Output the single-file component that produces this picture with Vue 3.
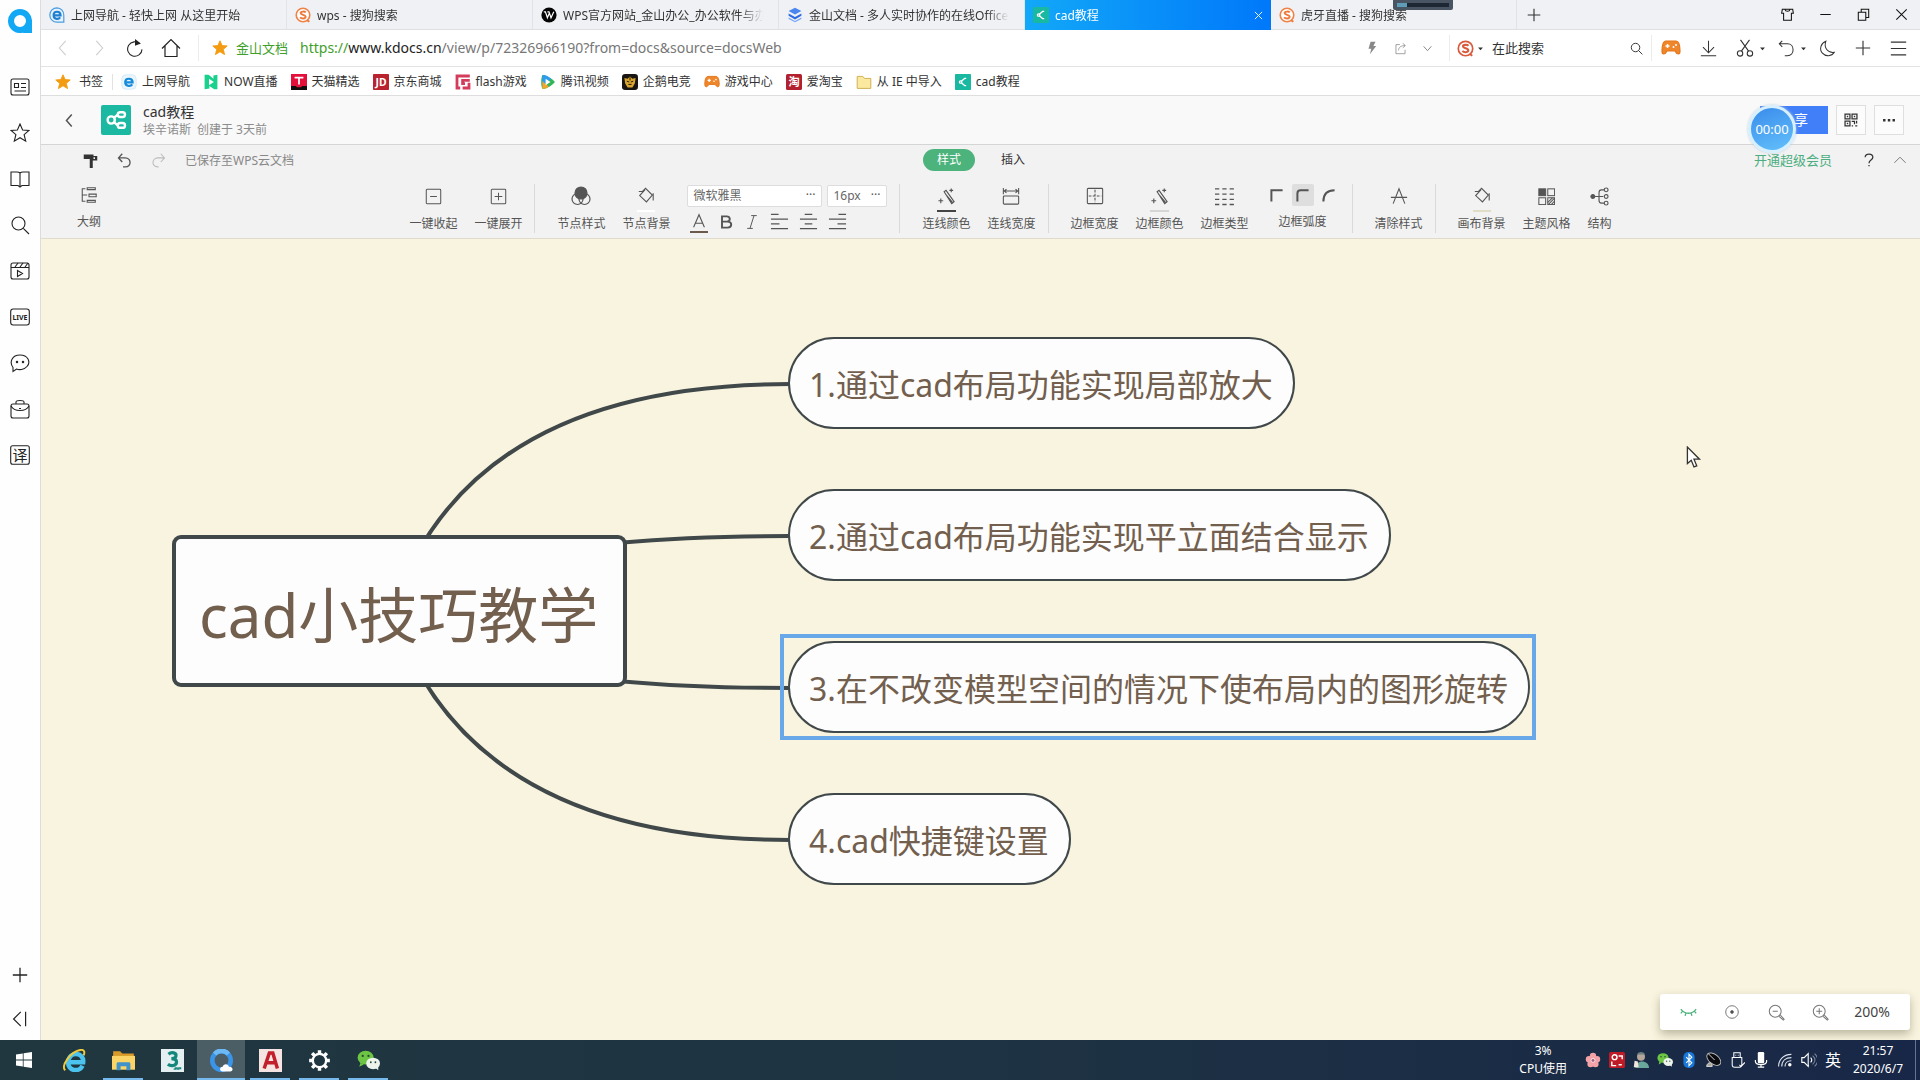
<script setup>
import { h, ref } from 'vue'

const star = '<path d="M10 1l2.6 6 6.4.5-4.9 4.2 1.6 6.5L10 14.7 4.300 18.200l1.600-6.500L1 7.500 7.400 7z"/>'
const sogou = '<circle cx="10" cy="10" r="8.500" stroke="#ee8247" stroke-width="2" fill="#fff"/><path d="M13.500 6.800C12 5.200 7 5.300 7 7.600c0 2.600 6.300 1.700 6.300 4.600 0 2.600-5 2.800-7 .8M15 16.500l3 2" stroke="#ee7a3c" stroke-width="2.400"/>'
const wand = '<path d="M7.500 5l2-1.500L18 15.500 15.500 17.500zM9 7.500l7.500 9M15 1.500v4M13 3.500h4M4 12v5M1.500 14.500h5"/>'
const bucket = '<path d="M5.500 5.500L9.500 1.500l7.500 7.500-6.500 7.500-7.500-7L9 3M2 5h5M18 7v8"/>'
const mind = '<circle cx="6" cy="10" r="3"/><path d="M8.500 8l3-2.500M8.500 12l3 2.500"/><rect x="11.500" y="3.500" width="6" height="4" rx="2"/><rect x="11.500" y="12.500" width="6" height="4" rx="2"/>'
const wechat = '<ellipse cx="7.500" cy="7.500" rx="7" ry="6" fill="#6cc644" stroke="none"/><path d="M3 12l-1 3.500 4-2z" fill="#6cc644" stroke="none"/><ellipse cx="14" cy="12.500" rx="6" ry="5" fill="#eef4ec" stroke="none"/><path d="M16 16.500l2.500 2v-4z" fill="#eef4ec" stroke="none"/><g fill="#2b4a35" stroke="none"><circle cx="5" cy="6" r="1"/><circle cx="10" cy="6" r="1"/><circle cx="12" cy="11.500" r=".8"/><circle cx="16" cy="11.500" r=".8"/></g>'

const icons = {
  star: `<g fill="#f39c12" stroke="#f39c12">${star}</g>`,
  starLine: star,
  navE: '<path d="M10 1a9 9 0 1 0 0 18h8.500v-8.500A9 9 0 0 0 10 1z" fill="#e8f2fb" stroke="#4a9de0" stroke-width="1.500"/><path d="M5.500 10.500h9c0-6-8.500-6-8.800-.5-.2 5.500 6 6 8.300 3" stroke="#1f7fd0" stroke-width="2.600"/>',
  bookE: '<rect x="1" y="1" width="18" height="18" rx="5" fill="#eaf5fc" stroke="#d5ebf8"/><path d="M5 10.500h9.500c0-6-9-6-9.200-.5-.2 5.500 6.500 6 8.800 3" stroke="#178bd9" stroke-width="2.800"/>',
  sogou,
  sogouRed: sogou.replace(/#ee8247|#ee7a3c/g, '#d9593b'),
  wps: '<circle cx="10" cy="10" r="9.500" fill="#050505" stroke="none"/><path d="M3.500 6h2L8 13.500l2.500-6M8 6h2l2.500 7.500L16 6" stroke="#fff" stroke-width="1.500"/>',
  docs: '<path d="M10 1l8 4-8 4.500L2 5z" fill="#4a86f0" stroke="none"/><path d="M2 8l8 4.500L18 8v3l-8 4.500L2 11z" fill="#2f6be0" stroke="none"/><path d="M2 13l8 4.500 8-4.500v2l-8 4-8-4z" fill="#74a6f8" stroke="none"/>',
  mindSmall: '<rect width="20" height="20" rx="1" fill="#19b8a0" stroke="none"/><g stroke="#fff" stroke-width="1.600"><circle cx="7" cy="10" r="1.500"/><path d="M8 9l4-3.500h2M8 11l4 3.500h2"/></g>',
  mind: `<g stroke-width="2">${mind}</g>`,
  now: '<path d="M2 1h5l6 5V2l5-1v18h-4l-6-4v3l-6 1z" fill="#19d08c" stroke="none"/><path d="M7.500 6l6 4-6 4z" fill="#fff" stroke="none"/>',
  tmall: '<rect width="20" height="20" fill="#e3103c" stroke="none"/><path d="M0 15h6l1.500 1.500h5L14 15h6v5H0z" fill="#130c0e" stroke="none"/><path d="M4.500 4.500h11M10 4.500V13" stroke="#fff" stroke-width="2.200"/>',
  jd: '<rect width="20" height="20" rx="1" fill="#b8232f" stroke="none"/><text x="10" y="15" text-anchor="middle" font-size="13" font-weight="bold" fill="#fff" stroke="none">JD</text>',
  flash: '<path d="M18.500 2.500h-16v15h4M18.500 8h-9v4h3M9.500 17.500h8V11" stroke="#d43c5b" stroke-width="3.500"/>',
  video: '<path d="M3 1.500C6 0 18 8 18.500 10 18 12.500 6 20 3 18.500 1 15 1 5 3 1.500z" fill="#35b558" stroke="none"/><path d="M3 1.500C6 0 12 4 14 6L3 15z" fill="#2f9bef" stroke="none"/><path d="M3 18.500C5 19 9 17 11 15.500L3 9z" fill="#f8a42b" stroke="none"/><path d="M7 6l6 4-6 4z" fill="#fff" stroke="none"/>',
  penguin: '<rect width="20" height="20" rx="4" fill="#191512" stroke="none"/><path d="M3 5l4 1 3-3 3 3 4-1-1 7-3 5h-6l-3-5z" fill="#d9a52e" stroke="none"/><path d="M6 9l3 1M14 9l-3 1M8 13h4M10 4v4" stroke="#191512"/>',
  pad: '<path d="M5 3h10c3 0 4 5 4 10 0 4-3 4-5 0H6c-2 4-5 4-5 0C1 8 2 3 5 3z" fill="#f0862a" stroke="#e2761c"/><path d="M4.500 8h4M6.500 6v4" stroke="#fff" stroke-width="1.500"/><circle cx="12.500" cy="9" r="1" fill="#fff" stroke="none"/><circle cx="15" cy="7" r="1" fill="#fff" stroke="none"/>',
  tao: '<rect width="20" height="20" rx="2" fill="#b3202e" stroke="none"/><text x="10" y="15" text-anchor="middle" font-size="14" font-weight="bold" fill="#fff" stroke="none">淘</text>',
  folder: '<path d="M1.500 3h7l2 2.500H18.500V18h-17z" fill="#fbe9a0" stroke="#cfae50"/>',
  left: '<path d="M13 2L6 10l7 8"/>',
  right: '<path d="M7 2l7 8-7 8"/>',
  reload: '<path d="M15.500 5.500a8 8 0 1 0 2.300 6"/><path d="M10 0l6.500 5L10 7.500z" fill="currentColor" stroke="none"/>',
  home: '<path d="M1 10.500L10 1.500l9 9M4 8v10.500h12V8"/>',
  bolt: '<path d="M8 1h7l-3 6h4L7 19l2-8H5z" fill="#888" stroke="none"/>',
  share: '<path d="M9 4H3v14h14v-6M7 13c0-5 4-7.500 10-7.500M13.500 2l4 3.500-4 3.500"/>',
  down: '<path d="M3 6l7 8 7-8"/>',
  up: '<path d="M2 14l8-8 8 8"/>',
  caret: '<path d="M3 7h14l-7 8z" fill="currentColor" stroke="none"/>',
  search: '<circle cx="8.500" cy="8.500" r="6.500"/><path d="M13.300 13.300L19 19"/>',
  download: '<path d="M10 1v14M3.500 8.500L10 15l6.500-6.500M1 18.500h18"/>',
  cut: '<circle cx="4.500" cy="16" r="3"/><circle cx="15.500" cy="16" r="3"/><path d="M6 13.500L15 1M14 13.500L5 1"/>',
  back: '<path d="M2 4.500h9c9 0 9 14 0 14H8M5 1L1.500 4.500 5 8"/>',
  moon: '<path d="M8 1.500C2 4 0 11 4 15.500c4 4.500 11 4 14-1C10 15.500 5.500 9 8 1.500z"/>',
  plus: '<path d="M10 1v18M1 10h18"/>',
  menu: '<path d="M1 2.500h18M1 10h18M1 17.500h18"/>',
  shirt: '<path d="M6 2H2L1 8h3v11h12V8h3l-1-6h-4c-1 4-7 4-8 0zM6 2h8"/>',
  min: '<path d="M2 10h16"/>',
  restore: '<path d="M2 6.500h11.500V19H2zM6.500 6.500V2H18v12.500h-4.500"/>',
  close: '<path d="M2 2l16 16M18 2L2 18"/>',
  news: '<rect x="1" y="2" width="18" height="16" rx="2"/><path d="M4.500 6.500h4v4h-4zM11 6.500h5M11 10.500h5M4.500 14h11.500"/>',
  book: '<path d="M10 4v13M10 4C9 3 8 3 7 3H1v13.500h7l2 1.500 2-1.500h7V3h-6c-1 0-2 0-3 1"/>',
  clip: '<rect x="1" y="2" width="18" height="16" rx="2"/><path d="M1 6.500h18M5 6l3-4M10 6l3-4M15 6l3-4M7.500 9.500v6l5-3z"/>',
  live: '<rect x="0.700" y="2" width="18.600" height="16" rx="2.500"/><text x="10" y="12.800" text-anchor="middle" font-size="7" font-weight="bold" fill="currentColor" stroke="none">LIVE</text>',
  chat: '<path d="M3 18.500v-4C-1 9 2 2 10 2s11 7 7 11.500c-3 3.500-8 3.500-10.500 2.500z"/><circle cx="7" cy="9" r=".7"/><circle cx="13" cy="9" r=".7"/>',
  bag: '<rect x="1" y="5" width="18" height="14" rx="2"/><path d="M6 5V3c0-2 8-2 8 0v2M1 7c3 6 15 6 18 0M9 9.500h2"/>',
  trans: '<rect x="0.700" y="0.700" width="18.600" height="18.600" rx="2"/><text x="10" y="15.500" text-anchor="middle" font-size="15" fill="currentColor" stroke="none">译</text>',
  collapse: '<path d="M11 1L2 10l9 9M17 1v18"/>',
  qlogo: '<path d="M10 0a10 10 0 1 0 2 19.800c2 .3 5 .2 8 .2v-9.500A10 10 0 0 0 10 0zm0 5a5 5 0 1 1 0 10 5 5 0 0 1 0-10z" fill="#12a8f4" fill-rule="evenodd" stroke="none"/>',
  qr: '<path d="M1.500 1.500h7v7h-7zM11.500 1.500h7v7h-7zM1.500 11.500h7v7h-7zM4 5h2M14 5h2M4 15h2M11 12h4v4M18 11v4M11 18.500h2M16 18.500h3" stroke-width="1.800"/>',
  more: '<path d="M1.500 8.500h3.500v3.500H1.500zM8.300 8.500h3.500v3.500H8.300zM15 8.500h3.500v3.500H15z" fill="currentColor" stroke="none"/>',
  painter: '<path d="M1 2h13v6H1zM14 4h5v6h-6v10H9V8h7V5.500h-2z" fill="currentColor" stroke="none"/>',
  undo: '<path d="M7 1L2 6.500 7 12M2 6.500h9c8 0 9 12 0 12H8"/>',
  redo: '<path d="M13 1l5 5.500-5 5.500M18 6.500H9c-8 0-9 12 0 12h1"/>',
  help: '<path d="M4.500 6C4.500 0 15.500 0 15.500 6c0 4-5.500 4-5.500 8.500M10 17v2"/>',
  outline: '<path d="M6 3H2.500v14H6M2.500 10H8M8 2h9v2H8zM10 9h8v3h-8zM8 16h9v2H8z"/>',
  boxMinus: '<rect x="1.500" y="1.500" width="17" height="17" rx="1"/><path d="M6 10h8"/>',
  boxPlus: '<rect x="1.500" y="1.500" width="17" height="17" rx="1"/><path d="M5.500 10h9M10 5.500v9"/>',
  venn: '<circle cx="6.500" cy="13" r="5.500"/><circle cx="13.500" cy="13" r="5.500"/><circle cx="10" cy="7" r="6" fill="currentColor"/>',
  bucket,
  wand,
  lineWidth: '<path d="M1.500 1v7M18.500 1v7M3 4.500h14M5 2.500l-2.500 2L5 6.500M15 2.500l2.500 2L15 6.500"/><rect x="1.500" y="10" width="17" height="9" rx="1"/>',
  borderWidth: '<rect x="1.500" y="1.500" width="17" height="17" rx="1"/><path d="M10 3v14M3 10h14" stroke-dasharray="3 1.500"/>',
  borderType: '<path d="M0 2h20M0 7.500h20M0 13h20M0 18.500h20" stroke-dasharray="4.500 3.200" stroke-width="1.500"/>',
  cornerSharp: '<path d="M3 18V4h14" stroke-width="2.500"/>',
  cornerSoft: '<path d="M3 18V8c0-3 1-4 4-4h10" stroke-width="2.500"/>',
  cornerRound: '<path d="M3 18C3 9 8 4 17 4" stroke-width="2.500"/>',
  clear: '<path d="M3.500 18.500L10 2l6.500 16.500M1 11.500h18"/>',
  theme: '<rect x="1" y="1" width="8" height="8" fill="currentColor"/><rect x="11.500" y="1" width="8" height="8"/><rect x="1" y="11.500" width="8" height="8"/><rect x="11.500" y="11.500" width="8" height="8"/><path d="M11.500 17l5.500-5.500M12 19.500l7.500-7.500M15.500 19.500l4-4"/>',
  tree: '<circle cx="3" cy="10" r="2" fill="currentColor"/><path d="M5 10h9M15 3h-3c-2 0-2.500 1-2.500 3v8c0 2 .5 3 2.500 3h3"/><circle cx="17" cy="3" r="2"/><circle cx="17" cy="10" r="2"/><circle cx="17" cy="17" r="2"/>',
  fontColor: '<path d="M4 17L10 3l6 14M6 12.500h8"/>',
  bold: '<path d="M5 2v16M5 3h6c5 0 5 6.500 0 6.500H5h7c6 0 6 7.500 0 7.500H5" stroke-width="2.400"/>',
  italic: '<path d="M9 2h7M4 18h7M12.500 2l-5 16"/>',
  alignL: '<path d="M1 2.500h8M1 7.500h18M1 12.500h9M1 17.500h18"/>',
  alignC: '<path d="M6 2.500h8M1 7.500h18M6 12.500h8M1 17.500h18"/>',
  alignR: '<path d="M11 2.500h8M1 7.500h18M10 12.500h9M1 17.500h18"/>',
  eye: '<path d="M1 6c5 6.500 13 6.500 18 0M3 8.500L1 11M7 10.500L6 14M13 10.500l1 3.500M17 8.500l2 2.500" stroke-width="1.500"/>',
  target: '<circle cx="10" cy="10" r="9"/><circle cx="10" cy="10" r="2" fill="#333"/>',
  zoomOut: '<circle cx="8.500" cy="8.500" r="7"/><path d="M5.500 8.500h6M13 14.500l5 4.500 1-1-4.500-5"/>',
  zoomIn: '<circle cx="8.500" cy="8.500" r="7"/><path d="M5 8.500h7M8.500 5v7M13 14.500l5 4.500 1-1-4.500-5"/>',
  win: '<path d="M0 3l8.500-1.200v7.700H0zM9.500 1.600L20 0v9.500H9.500zM0 10.500h8.500v7.700L0 17zM9.500 10.500H20V20L9.500 18.400z" fill="#fff" stroke="none"/>',
  ie: '<path d="M4.500 11.500h13c1-9-12-10-13-.5-.5 8.500 9.500 9.500 12.500 3.500" stroke="#4cc3ee" stroke-width="4"/><path d="M2 18.500C-2 15 6 2.500 15 .8c4-.5 4 2.200 3 4.700" stroke="#f0c93c" stroke-width="1.700"/>',
  explorer: '<path d="M1 2h6l2 2h10v5H1z" fill="#d89a28" stroke="none"/><path d="M0 6h20v12H0z" fill="#fbd468" stroke="none"/><path d="M4 18.500V13c0-1 .5-1.500 1.500-1.500h9c1 0 1.500.5 1.500 1.500v5.500h-3.500V15h-5v3.500z" fill="#3f93c9" stroke="none"/>',
  max: '<rect width="20" height="20" fill="#e3eff0" stroke="none"/><path d="M6.500 4.500c3-2.500 7-1 6.500 1.500-.3 2-2.500 2.300-4 2.300 2 0 4.500.7 4.500 3 0 3.500-5 4-7.500 2" stroke="#14877c" stroke-width="2.800"/><path d="M11 17.500h1.500v-1h1.500v1h1.500v-1H17v1" stroke="#14877c"/>',
  qq: '<circle cx="10" cy="10" r="8" stroke="#3a94e8" stroke-width="4"/><path d="M4 4.300a8 8 0 0 1 12 0" stroke="#6db9f5" stroke-width="4"/><path d="M11 19.500c-3 0-3-4 0-4 .5-3 5-3 5.500 0 4 0 4 4 1 4z" fill="#fff" stroke="none"/>',
  acad: '<rect width="20" height="20" fill="#f5e4e1" stroke="none"/><path d="M4.500 17L9 3.500h3L16 17M6 12h8.500" stroke="#c11f2c" stroke-width="3"/>',
  gear: '<circle cx="10" cy="10" r="5.800" stroke="#fff" stroke-width="2"/><path d="M10 1v3M10 16v3M1 10h3M16 10h3M3.600 3.600l2 2M14.400 14.400l2 2M16.400 3.600l-2 2M5.600 14.400l-2 2" stroke="#fff" stroke-width="3"/>',
  wechat,
  sakura: '<g fill="#f3a3a8" stroke="none"><circle cx="10" cy="5" r="4"/><circle cx="15" cy="9" r="4"/><circle cx="13" cy="15" r="4"/><circle cx="7" cy="15" r="4"/><circle cx="5" cy="9" r="4"/></g><circle cx="10" cy="10.500" r="2.500" fill="#a3627f" stroke="#fce4e6"/>',
  redApp: '<rect width="20" height="20" rx="2" fill="#bf1b26" stroke="none"/><path d="M3.500 12v5H9M16.500 9V5H12M12 16h4" stroke="#fff" stroke-width="1.800"/><circle cx="7" cy="6.500" r="3" stroke="#fff" stroke-width="1.800"/>',
  person: '<circle cx="10" cy="6" r="5" fill="#b5a699" stroke="none"/><path d="M5 3c2-4 8-4 10 0z" fill="#6b7f80" stroke="none"/><path d="M3 20c0-11 17-11 17 0z" fill="#6aa89b" stroke="none"/><path d="M2 11l4 1 1 7H1z" fill="#f0e7df" stroke="none"/>',
  bt: '<rect x="3" y="0" width="14" height="20" rx="6" fill="#1878d8" stroke="none"/><path d="M6.500 6.500l7 7L10 17V3l3.500 3.500-7 7" stroke="#fff" stroke-width="1.400"/>',
  dish: '<ellipse cx="11" cy="9" rx="10" ry="6" transform="rotate(38 11 9)" fill="#090b10" stroke="#b8b8b0"/><path d="M4 2l8 8M2 18c1-6 7-6 7 0z" stroke="#ddd" fill="#a5a596"/>',
  usb: '<path d="M6 1h8v6H6zM4 7h12v9c0 2-1 3-3 3H7c-2 0-3-1-3-3zM8 4h1M11 4h1M13 16l2 2 5-5" stroke="#fff" stroke-width="1.300"/>',
  mic: '<rect x="6" y="0" width="8" height="14" rx="1.500" fill="#fff" stroke="none"/><path d="M3 10v2c0 5 14 5 14 0v-2M10 16v3M6 19h8" stroke="#fff" stroke-width="1.500"/>',
  wifi: '<path d="M2 18C2 9 9 3 18 3M6 18c0-7 5-11 12-11M10 18c0-4 3-7 8-7" stroke="#dfe5ee" stroke-width="1.400"/><circle cx="16" cy="16" r="2.200" fill="#fff" stroke="none"/>',
  sound: '<path d="M1 7h3l5-5v16l-5-5H1zM12 7c2 2 2 4 0 6" stroke="#fff" stroke-width="1.400"/><path d="M14.500 4.500c4 3.500 4 7.500 0 11M17 2c5 5 5 11 0 16" stroke="#7d879b" stroke-width="1.300"/>',
  cursor: '<path d="M4 1v15l3.500-3 2.500 6 2.500-1-2.500-6h5z" fill="#fff" stroke="#333"/>'
}

const Icon = (p) =>
  h('svg', {
    viewBox: '0 0 20 20',
    width: p.size || 16,
    height: p.size || 16,
    fill: 'none',
    stroke: 'currentColor',
    'stroke-width': p.weight || 1.2,
    'aria-hidden': 'true',
    innerHTML: icons[p.name]
  })
Icon.props = ['name', 'size', 'weight']

const tabs = [
  { icon: 'navE', title: '上网导航 - 轻快上网 从这里开始' },
  { icon: 'sogou', title: 'wps - 搜狗搜索' },
  { icon: 'wps', title: 'WPS官方网站_金山办公_办公软件与办公' },
  { icon: 'docs', title: '金山文档 - 多人实时协作的在线Office' },
  { icon: 'mindSmall', title: 'cad教程', active: true },
  { icon: 'sogou', title: '虎牙直播 - 搜狗搜索' }
]
const windowButtons = [['shirt', '皮肤'], ['min', '最小化'], ['restore', '还原'], ['close', '关闭']]
const sideTools = [
  ['news', '资讯'], ['starLine', '收藏'], ['book', '阅读'], ['search', '搜索'], ['clip', '视频'],
  ['live', '直播'], ['chat', '消息'], ['bag', '工具'], ['trans', '翻译']
]
const bookmarks = [
  ['bookE', '上网导航'], ['now', 'NOW直播'], ['tmall', '天猫精选'], ['jd', '京东商城'],
  ['flash', 'flash游戏'], ['video', '腾讯视频'], ['penguin', '企鹅电竞'], ['pad', '游戏中心'],
  ['tao', '爱淘宝'], ['folder', '从 IE 中导入'], ['mindSmall', 'cad教程']
]
const taskApps = [
  ['ie', 'Internet Explorer', ''], ['explorer', '文件资源管理器', 'open'], ['max', '3ds Max', ''],
  ['qq', 'QQ浏览器', 'open current'], ['acad', 'AutoCAD', 'open'], ['gear', '设置', 'open'], ['wechat', '微信', 'open']
]
const tray = ['sakura', 'redApp', 'person', 'wechat', 'bt', 'dish', 'usb', 'mic', 'wifi', 'sound']
const aligns = [['alignL', '左对齐'], ['alignC', '居中'], ['alignR', '右对齐']]
const topics = [
  { y: 98, text: '1.通过cad布局功能实现局部放大' },
  { y: 250, text: '2.通过cad布局功能实现平立面结合显示' },
  { y: 402, text: '3.在不改变模型空间的情况下使布局内的图形旋转', selected: true },
  { y: 554, text: '4.cad快捷键设置' }
]
const font = ref('微软雅黑')
const size = ref('16px')
const query = ref('在此搜索')
</script>

<template>
  <div class="desktop">
    <div class="browser">
      <aside class="side">
        <button class="logo" aria-label="QQ浏览器"><Icon name="qlogo" size="24" /></button>
        <button v-for="s in sideTools" :key="s[0]" class="side-btn" :aria-label="s[1]">
          <Icon :name="s[0]" size="20" weight="1.1" />
        </button>
        <span class="grow"></span>
        <button class="side-btn" aria-label="添加"><Icon name="plus" size="16" weight="1.600" /></button>
        <button class="side-btn last" aria-label="收起"><Icon name="collapse" size="16" weight="1.500" /></button>
      </aside>

      <div class="main">
        <nav class="tabs">
          <button v-for="t in tabs" :key="t.title" class="tab" :class="{ active: t.active }">
            <Icon :name="t.icon" size="16" />
            <span class="tab-title">{{ t.title }}</span>
            <Icon v-if="t.active" name="close" size="9" weight="2" />
          </button>
          <button class="new-tab" aria-label="新标签页"><Icon name="plus" size="14" weight="1.600" /></button>
          <span class="grow"></span>
          <button v-for="w in windowButtons" :key="w[0]" class="win-btn" :aria-label="w[1]">
            <Icon :name="w[0]" size="13" weight="1.600" />
          </button>
          <span class="meter"><i></i></span>
        </nav>

        <div class="address">
          <button class="nav-btn off" aria-label="后退"><Icon name="left" size="18" /></button>
          <button class="nav-btn off" aria-label="前进"><Icon name="right" size="18" /></button>
          <button class="nav-btn" aria-label="刷新"><Icon name="reload" size="18" /></button>
          <button class="nav-btn" aria-label="主页"><Icon name="home" size="20" /></button>
          <span class="rule"></span>
          <Icon class="fav" name="star" size="16" />
          <span class="site">金山文档</span>
          <a class="url" href="#"><span class="green">https://</span><span class="host">www.kdocs.cn</span>/view/p/72326966190?from=docs&amp;source=docsWeb</a>
          <span class="grow"></span>
          <div class="quick">
            <button aria-label="极速模式"><Icon name="bolt" size="14" /></button>
            <button aria-label="分享页面"><Icon name="share" size="13" /></button>
            <button aria-label="展开"><Icon name="down" size="11" weight="1.800" /></button>
          </div>
          <label class="search">
            <Icon name="sogouRed" size="17" />
            <Icon name="caret" size="7" />
            <input v-model="query" type="text" aria-label="搜索" />
            <Icon name="search" size="13" weight="1.500" />
          </label>
          <div class="tools">
            <button aria-label="游戏"><Icon name="pad" size="20" /></button>
            <button aria-label="下载"><Icon name="download" size="17" /></button>
            <button class="with-menu" aria-label="截图"><Icon name="cut" size="18" /><Icon name="caret" size="7" /></button>
            <button class="with-menu" aria-label="恢复"><Icon name="back" size="17" /><Icon name="caret" size="7" /></button>
            <button aria-label="夜间模式"><Icon name="moon" size="17" /></button>
            <button aria-label="扩展"><Icon name="plus" size="16" weight="1.400" /></button>
            <button aria-label="菜单"><Icon name="menu" size="17" weight="1.400" /></button>
          </div>
        </div>

        <nav class="bookmarks">
          <a href="#" class="bm-first"><Icon name="star" size="16" />书签</a>
          <a v-for="b in bookmarks" :key="b[1]" href="#"><Icon :name="b[0]" size="16" />{{ b[1] }}</a>
        </nav>

        <header class="doc">
          <button class="doc-back" aria-label="返回"><Icon name="left" size="15" weight="2" /></button>
          <span class="doc-icon"><Icon name="mind" size="24" /></span>
          <div class="doc-info">
            <h1>cad教程</h1>
            <p>埃辛诺斯&ensp;创建于 3天前</p>
          </div>
          <span class="grow"></span>
          <button class="share-btn">分享</button>
          <button class="sq" aria-label="二维码"><Icon name="qr" size="14" /></button>
          <button class="sq" aria-label="更多"><Icon name="more" size="14" /></button>
          <span class="timer">00:00</span>
        </header>

        <section class="ribbon">
          <div class="ribbon-top">
            <div class="history">
              <button aria-label="格式刷"><Icon name="painter" size="15" /></button>
              <button class="mid" aria-label="撤销"><Icon name="undo" size="15" weight="1.800" /></button>
              <button class="dim" aria-label="重做"><Icon name="redo" size="15" weight="1.400" /></button>
              <span class="saved">已保存至WPS云文档</span>
            </div>
            <div class="modes">
              <button class="mode on">样式</button>
              <button class="mode">插入</button>
            </div>
            <div class="account">
              <a href="#">开通超级会员</a>
              <button aria-label="帮助"><Icon name="help" size="14" weight="1.800" /></button>
              <button aria-label="折叠工具栏"><Icon name="up" size="14" weight="1.400" /></button>
            </div>
          </div>

          <div class="ribbon-tools">
            <button class="tool outline"><span class="pic"><Icon name="outline" size="18" /></span>大纲</button>
            <div class="groups">
              <div class="group">
                <button class="tool"><span class="pic"><Icon name="boxMinus" size="17" /></span>一键收起</button>
                <button class="tool"><span class="pic"><Icon name="boxPlus" size="17" /></span>一键展开</button>
              </div>
              <div class="group">
                <button class="tool"><span class="pic"><Icon name="venn" size="20" /></span>节点样式</button>
                <button class="tool"><span class="pic bar-white"><Icon name="bucket" size="18" /></span>节点背景</button>
                <div class="text-tools">
                  <div class="row">
                    <label class="pick wide">
                      <select v-model="font" aria-label="字体"><option>微软雅黑</option></select><span>···</span>
                    </label>
                    <label class="pick">
                      <select v-model="size" aria-label="字号"><option>16px</option></select><span>···</span>
                    </label>
                  </div>
                  <div class="row marks">
                    <button class="font-color" aria-label="字体颜色"><Icon name="fontColor" size="18" /></button>
                    <button aria-label="加粗"><Icon name="bold" size="16" /></button>
                    <button aria-label="斜体"><Icon name="italic" size="16" /></button>
                    <button v-for="a in aligns" :key="a[0]" :aria-label="a[1]"><Icon :name="a[0]" size="19" /></button>
                  </div>
                </div>
              </div>
              <div class="group">
                <button class="tool"><span class="pic bar-dark"><Icon name="wand" size="19" /></span>连线颜色</button>
                <button class="tool"><span class="pic"><Icon name="lineWidth" size="18" /></span>连线宽度</button>
              </div>
              <div class="group">
                <button class="tool"><span class="pic"><Icon name="borderWidth" size="18" /></span>边框宽度</button>
                <button class="tool"><span class="pic bar-grey"><Icon name="wand" size="19" /></span>边框颜色</button>
                <button class="tool"><span class="pic"><Icon name="borderType" size="19" /></span>边框类型</button>
                <div class="tool corners">
                  <div class="pic">
                    <button aria-label="直角"><Icon name="cornerSharp" size="16" /></button>
                    <button class="on" aria-label="小圆角"><Icon name="cornerSoft" size="16" /></button>
                    <button aria-label="大圆角"><Icon name="cornerRound" size="16" /></button>
                  </div>
                  边框弧度
                </div>
              </div>
              <div class="group">
                <button class="tool"><span class="pic"><Icon name="clear" size="18" /></span>清除样式</button>
              </div>
              <div class="group">
                <button class="tool"><span class="pic bar-cream"><Icon name="bucket" size="18" /></span>画布背景</button>
                <button class="tool"><span class="pic"><Icon name="theme" size="17" /></span>主题风格</button>
                <button class="tool"><span class="pic"><Icon name="tree" size="19" /></span>结构</button>
              </div>
            </div>
          </div>
        </section>

        <main class="canvas">
          <svg class="links" aria-hidden="true">
            <path v-for="t in topics" :key="t.y" :d="`M351 372Q427 ${t.y + 47} 749 ${t.y + 47}`" />
          </svg>
          <div class="root">cad小技巧教学</div>
          <div v-for="t in topics" :key="t.y" class="topic" :class="{ selected: t.selected }" :style="{ top: t.y + 'px' }">{{ t.text }}</div>
          <Icon class="pointer" name="cursor" size="22" />
          <div class="zoom">
            <button class="leaf" aria-label="鹰眼"><Icon name="eye" size="17" /></button>
            <button aria-label="定位"><Icon name="target" size="14" weight="1.400" /></button>
            <button aria-label="缩小"><Icon name="zoomOut" size="17" /></button>
            <button aria-label="放大"><Icon name="zoomIn" size="17" /></button>
            <span>200%</span>
          </div>
        </main>
      </div>
    </div>

    <footer class="taskbar">
      <button class="start" aria-label="开始"><Icon name="win" size="16" /></button>
      <button v-for="a in taskApps" :key="a[0]" class="app" :class="a[2]" :aria-label="a[1]"><Icon :name="a[0]" size="23" /></button>
      <span class="grow"></span>
      <span class="cpu">3%<br />CPU使用</span>
      <div class="tray">
        <Icon v-for="n in tray" :key="n" :name="n" size="16" />
      </div>
      <span class="ime">英</span>
      <time class="clock">21:57<br />2020/6/7</time>
      <span class="show-desktop"></span>
    </footer>
  </div>
</template>

<style>
body {
  margin: 0;
}
</style>

<style scoped>
.desktop {
  display: flex;
  flex-direction: column;
  min-height: 100vh;
  font: 12px/16px "Noto Sans", "Noto Sans CJK SC", sans-serif;
  color: #333;
  background: #fff;
}
button {
  display: flex;
  align-items: center;
  justify-content: center;
  padding: 0;
  border: 0;
  background: none;
  font: inherit;
  color: inherit;
}
a {
  color: inherit;
  text-decoration: none;
}
svg {
  flex: none;
}
.grow {
  flex: 1;
}
.browser {
  flex: 1;
  display: flex;
}
.side {
  width: 40px;
  border-right: 1px solid #dcdcdc;
  display: flex;
  flex-direction: column;
  background: #fefefe;
  color: #222;
}
.logo {
  height: 42px;
  margin-bottom: 22px;
}
.side-btn {
  height: 46px;
}
.side-btn.last {
  height: 42px;
}
.main {
  flex: 1;
  min-width: 0;
  display: flex;
  flex-direction: column;
}

.tabs {
  position: relative;
  display: flex;
  height: 29px;
  background: #f0f1f4;
  border-bottom: 1px solid #dedfe2;
}
.tab {
  flex: 0 1 246px;
  min-width: 0;
  box-sizing: border-box;
  justify-content: flex-start;
  gap: 6px;
  padding: 0 15px 0 8px;
  border-right: 1px solid #e2e3e6;
}
.tab-title {
  flex: 1;
  overflow: hidden;
  padding-top: 2px;
  white-space: nowrap;
  text-align: left;
  mask-image: linear-gradient(to right, #000 88%, transparent);
}
.tab.active {
  height: 30px;
  padding-right: 8px;
  background: linear-gradient(to right, #12a8f8, #0078fa);
  border: 0;
  color: #fff;
}
.new-tab {
  width: 34px;
}
.win-btn {
  width: 38px;
  color: #111;
}
.meter {
  position: absolute;
  top: 0;
  right: 467px;
  width: 60px;
  height: 10px;
  box-sizing: border-box;
  padding: 3px 4px;
  background: #4a5563;
  border-radius: 0 0 2px 2px;
}
.meter i {
  display: block;
  height: 4px;
  background: linear-gradient(to right, #5f9cb8 20%, #1c2733 20%);
}

.address {
  display: flex;
  align-items: center;
  height: 36px;
  border-bottom: 1px solid #e3e3e3;
}
.nav-btn {
  width: 36px;
  color: #222;
}
.nav-btn.off {
  color: #ccc;
}
.nav-btn:first-child {
  margin-left: 4px;
}
.rule {
  width: 1px;
  height: 26px;
  margin-left: 9px;
  background: #ececec;
}
.fav {
  margin: 0 8px 0 13px;
}
.site {
  font-size: 13px;
  color: #3f9f2a;
}
.url {
  margin-left: 12px;
  font-size: 14px;
  color: #777;
  white-space: nowrap;
}
.green {
  color: #3f9f2a;
}
.host {
  color: #222;
}
.quick {
  display: flex;
  align-items: center;
  gap: 15px;
  padding-right: 16px;
  color: #888;
}
.search {
  box-sizing: border-box;
  width: 203px;
  height: 26px;
  display: flex;
  align-items: center;
  gap: 3px;
  padding: 0 8px 0 7px;
  border: solid #ececec;
  border-width: 0 1px;
}
.search input {
  flex: 1;
  min-width: 0;
  border: 0;
  padding: 0 0 0 5px;
  font: inherit;
  font-size: 13px;
  color: #333;
  background: none;
}
.tools {
  display: flex;
  align-items: center;
  gap: 19px;
  padding: 0 13px 0 9px;
}
.tools button {
  gap: 5px;
}
.tools .with-menu {
  margin-right: -7px;
}

.bookmarks {
  display: flex;
  align-items: center;
  gap: 13px;
  height: 27px;
  padding: 1px 0 0 14px;
  border-bottom: 1px solid #dedede;
  white-space: nowrap;
}
.bookmarks a {
  display: flex;
  align-items: center;
  gap: 5px;
}
.bookmarks .bm-first {
  gap: 8px;
  padding-right: 9px;
  margin-right: -5px;
  border-right: 1px solid #e2e2e2;
}

.doc {
  position: relative;
  display: flex;
  align-items: center;
  height: 48px;
  padding: 0 16px 0 18px;
  background: #f9f9f9;
  border-bottom: 1px solid #d5d5d5;
}
.doc-back {
  width: 20px;
  color: #555;
}
.doc-icon {
  display: flex;
  align-items: center;
  justify-content: center;
  width: 30px;
  height: 30px;
  margin: 0 12px 0 22px;
  background: #1cb9a2;
  color: #fff;
  border-radius: 2px;
}
.doc-info {
  padding-top: 2px;
}
.doc-info h1 {
  margin: 0;
  font-size: 14px;
  font-weight: 400;
  line-height: 18px;
}
.doc-info p {
  margin: 0;
  line-height: 18px;
  color: #8c8c8c;
}
.share-btn {
  width: 68px;
  height: 28px;
  margin-right: 8px;
  background: #417ff9;
  color: #fff;
  font-size: 14px;
}
.sq {
  width: 30px;
  height: 30px;
  border: 1px solid #dfdfdf;
  background: #fcfcfc;
}
.sq + .sq {
  margin-left: 8px;
}
.timer {
  position: absolute;
  z-index: 2;
  top: 9px;
  right: 124px;
  width: 42px;
  height: 42px;
  border: 3px solid #d6f0ff;
  border-radius: 50%;
  background: linear-gradient(160deg, #3b8ceb, #62c0fb);
  box-shadow: 0 0 3px #bcd;
  color: #fff;
  font-size: 13px;
  line-height: 42px;
  text-align: center;
}

.ribbon {
  height: 93px;
  background: #f2f2f2;
  border-bottom: 1px solid #dfdccd;
  white-space: nowrap;
}
.ribbon-top {
  display: flex;
  align-items: center;
  height: 30px;
}
.history,
.account {
  flex: 1;
  display: flex;
  align-items: center;
}
.history {
  gap: 19px;
  padding-left: 42px;
}
.mid {
  color: #555;
}
.dim {
  color: #bbb;
}
.saved {
  padding-top: 2px;
  color: #888;
}
.modes {
  display: flex;
  gap: 12px;
  margin-right: 30px;
}
.mode {
  padding: 0 14px;
  height: 22px;
  border-radius: 11px;
}
.mode.on {
  background: #4cb37c;
  color: #fff;
}
.account {
  justify-content: flex-end;
  padding-right: 11px;
}
.account a {
  font-size: 13px;
  color: #4cae80;
}
.account button {
  width: 18px;
  margin-left: 28px;
}
.account button + button {
  margin-left: 13px;
  color: #777;
}
.ribbon-tools {
  display: flex;
  align-items: flex-start;
  padding-top: 9px;
  color: #555;
}
.outline {
  margin-left: 36px;
}
.groups {
  flex: 1;
  display: flex;
  justify-content: center;
}
.group {
  display: flex;
  gap: 17px;
}
.group + .group {
  padding-left: 22px;
  margin-left: 12px;
  border-left: 1px solid #dadada;
}
.tool {
  display: flex;
  flex-direction: column;
  align-items: center;
  gap: 4px;
}
.pic {
  box-sizing: border-box;
  display: flex;
  align-items: center;
  justify-content: center;
  height: 26px;
  padding-bottom: 3px;
  border-bottom: 2px solid transparent;
}
.bar-dark {
  border-color: #444;
}
.bar-white {
  border-color: #fff;
}
.bar-grey {
  border-color: #d5d5d5;
}
.bar-cream {
  border-color: #e0dcc6;
}
.corners .pic {
  gap: 4px;
}
.corners button {
  width: 22px;
  height: 22px;
  border-radius: 2px;
}
.corners .on {
  background: #dedede;
}
.text-tools {
  display: flex;
  flex-direction: column;
  gap: 3px;
  padding-top: 1px;
}
.row {
  display: flex;
  gap: 5px;
}
.pick {
  position: relative;
  display: flex;
  width: 60px;
  height: 22px;
}
.wide {
  width: 135px;
}
.pick select {
  appearance: none;
  width: 100%;
  padding: 0 5px;
  border: 1px solid #ddd;
  border-radius: 2px;
  background: #fff;
  font: inherit;
  color: #666;
}
.pick span {
  position: absolute;
  right: 7px;
  top: 2px;
  pointer-events: none;
}
.marks {
  gap: 10px;
  padding-left: 3px;
  height: 23px;
}
.font-color {
  border-bottom: 2px solid #6b5a4c;
}

.canvas {
  position: relative;
  flex: 1;
  overflow: hidden;
  background: #f9f4df;
}
.links {
  position: absolute;
  inset: 0;
  width: 100%;
  height: 100%;
  fill: none;
  stroke: #41484a;
  stroke-width: 4;
}
.root,
.topic {
  position: absolute;
  box-sizing: border-box;
  background: #fdfdfd;
  color: #735f4e;
  white-space: nowrap;
}
.root {
  left: 131px;
  top: 296px;
  min-width: 455px;
  height: 152px;
  padding: 0 23px;
  border: 4px solid #41484a;
  border-radius: 9px;
  font-size: 60px;
  line-height: 152px;
}
.topic {
  left: 747px;
  height: 92px;
  padding: 0 20px 0 19px;
  border: 2px solid #41484a;
  border-radius: 46px;
  font-size: 32px;
  line-height: 92px;
}
.topic.selected::after {
  content: "";
  position: absolute;
  inset: -9px -8px -9px -10px;
  border: 4px solid #68a8e8;
}
.pointer {
  position: absolute;
  left: 1642px;
  top: 207px;
}
.zoom {
  position: absolute;
  right: 10px;
  bottom: 10px;
  display: flex;
  align-items: center;
  height: 36px;
  padding: 0 20px 0 6px;
  background: #fff;
  border-radius: 3px;
  box-shadow: 0 4px 10px #b9b49c;
  color: #777;
}
.zoom button {
  width: 44px;
}
.zoom .leaf {
  color: #4cb37c;
}
.zoom span {
  width: 48px;
  text-align: right;
  font-size: 14px;
  color: #444;
}

.taskbar {
  display: flex;
  align-items: center;
  height: 40px;
  background: linear-gradient(to right, #20373f, #1e3343 50%, #182747);
  color: #fff;
  text-align: center;
}
.start {
  width: 48px;
  height: 40px;
}
.app {
  position: relative;
  width: 48px;
  height: 40px;
  margin-left: 1px;
}
.start + .app {
  margin-left: 2px;
}
.app.open::after {
  content: "";
  position: absolute;
  inset: 38px 4px 0;
  background: #76b9ed;
}
.app.current {
  background: #4b5e66;
}
.app.current::after {
  inset: 38px 0 0;
}
.cpu,
.clock {
  line-height: 18px;
}
.tray {
  display: flex;
  gap: 8px;
  margin: 0 8px 0 18px;
}
.ime {
  font-size: 16px;
}
.clock {
  width: 74px;
}
.show-desktop {
  width: 4px;
  height: 40px;
  border-left: 1px solid #66738a;
}
</style>
